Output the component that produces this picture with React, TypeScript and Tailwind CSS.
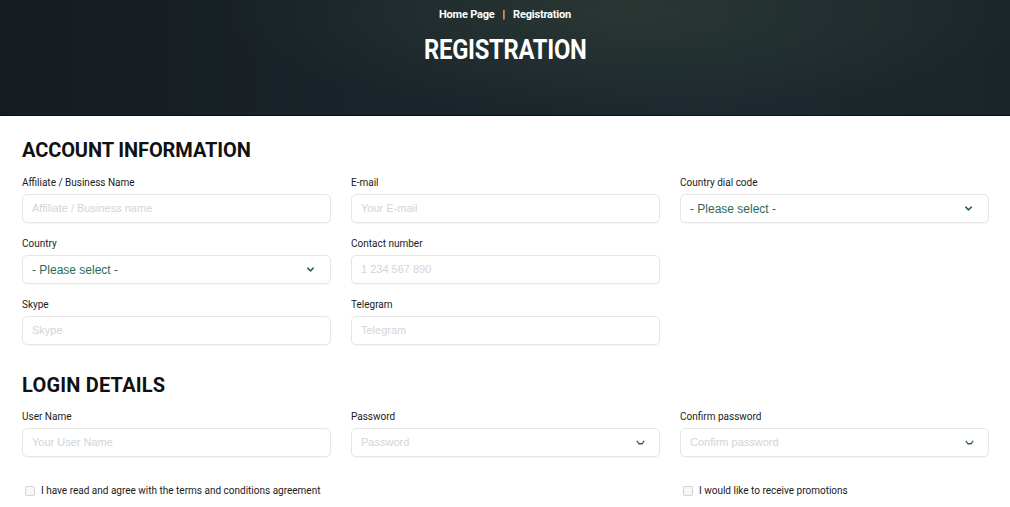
import React from "react";

const din = { fontFamily: "Roboto, 'DejaVu Sans', sans-serif" };
const arial = { fontFamily: "'Liberation Sans', Arial, sans-serif" };

function Chevron() {
  return (
    <svg width="11" height="11" viewBox="0 0 12 12" fill="none" stroke="#2c5f50" strokeWidth="1.6" strokeLinecap="round" strokeLinejoin="round">
      <path d="M3 4.5 L6 7.5 L9 4.5" />
    </svg>
  );
}

function EyeMark() {
  return (
    <svg width="9" height="5" viewBox="0 0 10 6" fill="none" stroke="#2c5f50" strokeWidth="1.6" strokeLinecap="round" strokeLinejoin="round">
      <path d="M1 1.5 L3 4.5 L7 4.5 L9 1.5" />
    </svg>
  );
}

function Field({ label, placeholder, select, eye }: { label: string; placeholder?: string; select?: boolean; eye?: boolean }) {
  return (
    <div className="flex flex-col">
      <div className="text-[10px] leading-[14px] text-[#1a1a1a] h-[14px] whitespace-nowrap" style={din}>{label}</div>
      <div className="mt-1 h-[29px] rounded-[5px] border border-[#e6e6e6] bg-white flex items-center justify-between pl-[9px] pr-[14px] shadow-[0_1px_1px_rgba(0,0,0,0.03)]">
        {select ? (
          <span className="text-[12px] text-[#2b6a58]" style={arial}>- Please select -</span>
        ) : (
          <span className="text-[11px] text-[#d4d4d4]" style={arial}>{placeholder}</span>
        )}
        {select && <Chevron />}
        {eye && <EyeMark />}
      </div>
    </div>
  );
}

function Checkbox({ label }: { label: string }) {
  return (
    <div className="flex items-center gap-[6px] pl-[3px] whitespace-nowrap">
      <div className="w-[10px] h-[10px] shrink-0 rounded-[2px] border border-[#d4d4d4] bg-[#f7f7f7]" />
      <span className="text-[10px] leading-[14px] text-[#1a1a1a]" style={din}>{label}</span>
    </div>
  );
}

export default function App() {
  return (
    <div className="w-[1010px] h-[507px] bg-white overflow-hidden">
      <header className="h-[116px] border-b border-[#0d1114] bg-[radial-gradient(ellipse_40%_90%_at_62%_10%,rgba(44,58,52,0.8)_0%,rgba(44,58,52,0)_100%),linear-gradient(90deg,#151c21_0%,#1a242a_40%,#1d292f_70%,#1b2529_100%)] flex flex-col items-center">
        <div className="mt-[7px] flex items-center gap-[8px] text-[11px] font-bold text-white tracking-[-0.2px]" style={din}>
          <span>Home Page</span>
          <span className="font-normal">|</span>
          <span>Registration</span>
        </div>
        <h1 className="mt-[10px] text-[27px] leading-[32px] font-bold text-white tracking-[-0.3px] scale-x-[0.88]" style={din}>REGISTRATION</h1>
      </header>

      <main className="pl-[22px] pr-[21px]">
        <h2 className="mt-[22px] text-[20px] leading-[24px] font-bold text-[#111] tracking-[-0.1px]" style={din}>ACCOUNT INFORMATION</h2>
        <div className="mt-[14px] grid grid-cols-3 gap-x-5 gap-y-[14px]">
          <Field label="Affiliate / Business Name" placeholder="Affiliate / Business name" />
          <Field label="E-mail" placeholder="Your E-mail" />
          <Field label="Country dial code" select />
          <Field label="Country" select />
          <Field label="Contact number" placeholder="1 234 567 890" />
          <div />
          <Field label="Skype" placeholder="Skype" />
          <Field label="Telegram" placeholder="Telegram" />
          <div />
        </div>

        <h2 className="mt-[28px] text-[20px] leading-[24px] font-bold text-[#111] tracking-[0.2px]" style={din}>LOGIN DETAILS</h2>
        <div className="mt-[13px] grid grid-cols-3 gap-x-5">
          <Field label="User Name" placeholder="Your User Name" />
          <Field label="Password" placeholder="Password" eye />
          <Field label="Confirm password" placeholder="Confirm password" eye />
        </div>
        <div className="mt-[27px] grid grid-cols-3 gap-x-5">
          <Checkbox label="I have read and agree with the terms and conditions agreement" />
          <div />
          <Checkbox label="I would like to receive promotions" />
        </div>
      </main>
    </div>
  );
}
